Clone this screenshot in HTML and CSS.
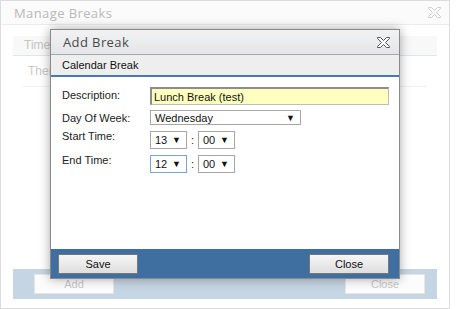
FILE: index.html
```html
<!DOCTYPE html>
<html>
<head>
  <title>Manage Breaks</title>
  <link rel="stylesheet" href="styles.css">
</head>
<body>
  <!-- Background window (disabled while the dialog is open) -->
  <div class="window">
    <div class="win-title">
      <span>Manage Breaks</span>
      <svg class="x-icon faded" width="13" height="11" viewBox="0 0 13 11"><polygon points="0.5,0.5 3.5,0.5 6.5,3.5 9.5,0.5 12.5,0.5 12.5,1.5 8.5,5.5 12.5,9.5 12.5,10.5 9.5,10.5 6.5,7.5 3.5,10.5 0.5,10.5 0.5,9.5 4.5,5.5 0.5,1.5"/></svg>
    </div>
    <div class="win-body">
      <div class="grid-head">TimeT</div>
      <div class="grid-empty">Ther</div>
      <div class="win-spacer"></div>
      <div class="win-footer">
        <span class="btn faded-btn">Add</span>
        <span class="btn faded-btn">Close</span>
      </div>
    </div>
  </div>

  <!-- Add Break dialog -->
  <div class="dialog">
    <div class="dlg-title">
      <span>Add Break</span>
      <svg class="x-icon" width="13" height="11" viewBox="0 0 13 11"><polygon points="0.5,0.5 3.5,0.5 6.5,3.5 9.5,0.5 12.5,0.5 12.5,1.5 8.5,5.5 12.5,9.5 12.5,10.5 9.5,10.5 6.5,7.5 3.5,10.5 0.5,10.5 0.5,9.5 4.5,5.5 0.5,1.5"/></svg>
    </div>
    <div class="dlg-sub">Calendar Break</div>
    <div class="dlg-body">
      <div class="form">
        <label>Description:</label>
        <input type="text" class="text-input" value="Lunch Break (test)">
        <label>Day Of Week:</label>
        <span class="select day">Wednesday <i>&#9660;</i></span>
        <label>Start Time:</label>
        <span class="time">
          <span class="select small">13 <i>&#9660;</i></span>
          <span class="colon">:</span>
          <span class="select small">00 <i>&#9660;</i></span>
        </span>
        <label>End Time:</label>
        <span class="time">
          <span class="select small focus">12 <i>&#9660;</i></span>
          <span class="colon">:</span>
          <span class="select small">00 <i>&#9660;</i></span>
        </span>
      </div>
    </div>
    <div class="dlg-footer">
      <span class="btn">Save</span>
      <span class="btn">Close</span>
    </div>
  </div>
</body>
</html>
```

FILE: styles.css
```css
body { margin: 0; width: 457px; height: 309px; overflow: hidden; background: #fff; font-family: "Liberation Sans", Arial, sans-serif; font-size: 11px; }

/* background window */
.window { width: 448px; height: 307px; border: 1px solid #dcdcdc; display: flex; flex-direction: column; background: #fff; }
.win-title {
  height: 23px; border-bottom: 1px solid #ececec; background: #fbfbfb;
  display: flex; align-items: center; justify-content: space-between; padding: 0 8px 0 13px;
  font-family: "Open Sans", sans-serif; font-size: 13px; letter-spacing: 0.4px; color: #b8b8b8;
}
.win-body { flex: 1; display: flex; flex-direction: column; padding: 11px 12px 9px 12px; }
.grid-head { height: 19px; line-height: 19px; background: #f8f8f8; border-bottom: 1px solid #dfe5ea; padding-left: 11px; color: #c4c4c4; font-size: 12px; }
.grid-empty { margin: 0 10px; height: 30px; line-height: 30px; padding-left: 5px; border-bottom: 1px solid #f0f0f0; color: #c8c8c8; font-size: 12px; }
.win-spacer { flex: 1; }
.win-footer { height: 30px; background: #c6d5e3; display: flex; align-items: center; justify-content: space-between; padding: 0 12px 0 21px; }
.faded-btn { background: #fcfcfc !important; border-color: #e6e6e6 !important; color: #c8c8c8 !important; }

.x-icon polygon { fill: #fff; stroke: #555; stroke-width: 1; }
.x-icon.faded polygon { fill: #fbfbfb; stroke: #cfcfcf; }

/* dialog */
.dialog {
  position: absolute; left: 50px; top: 29px; width: 348px; height: 248px;
  border: 1px solid #8a8a8a; background: #fff; display: flex; flex-direction: column;
  box-shadow: 0 0 10px rgba(0,0,0,0.35);
}
.dlg-title {
  height: 24px; border-bottom: 1px solid #a9a9a9;
  background: linear-gradient(#f2f2f2, #e3e5e8);
  display: flex; align-items: center; justify-content: space-between; padding: 0 9px 0 12px;
  font-family: "Open Sans", sans-serif; font-size: 13px; letter-spacing: 0.4px; color: #4a4a4a;
}
.dlg-sub { height: 20px; line-height: 20px; padding-left: 11px; background: #eeeeee; border-bottom: 2px solid #4a79ad; color: #111; }
.dlg-body { flex: 1; padding: 10px 10px 0 11px; }
.dlg-footer { height: 29px; background: #3f6fa0; display: flex; align-items: center; justify-content: space-between; padding: 0 10px 0 7px; }

.form { display: grid; grid-template-columns: 88px 1fr; row-gap: 5px; align-items: start; color: #222; }
.form label { line-height: 12px; padding-top: 2px; }
.text-input {
  width: 239px; height: 18px; box-sizing: border-box; margin: 0; padding: 0 2px;
  border: 1px solid #bdbdbd; border-left: 2px solid #8c8c8c; border-top: 2px solid #8c8c8c;
  background: #ffffc0; font-family: "Liberation Sans", Arial, sans-serif; font-size: 11px; color: #111;
}
.select {
  display: inline-flex; align-items: center; justify-content: space-between; box-sizing: border-box;
  border: 1px solid #a6a6a6; background: #fff; padding: 0 5px 0 4px; color: #111;
}
.select i { font-style: normal; font-size: 9px; }
.select.day { width: 151px; height: 15px; }
.select.small { width: 37px; height: 18px; }
.select.focus { border-color: #7ba4d6; }
.time { display: flex; align-items: center; margin-top: 1px; }
.colon { width: 11px; text-align: center; }
.form .select.day + label, .form .time + label { padding-top: 0; }

.btn {
  display: inline-block; width: 78px; height: 18px; line-height: 18px; text-align: center;
  border: 1px solid #777; background: linear-gradient(#f6f6f6, #dedede); color: #111; font-size: 11px;
}
```
